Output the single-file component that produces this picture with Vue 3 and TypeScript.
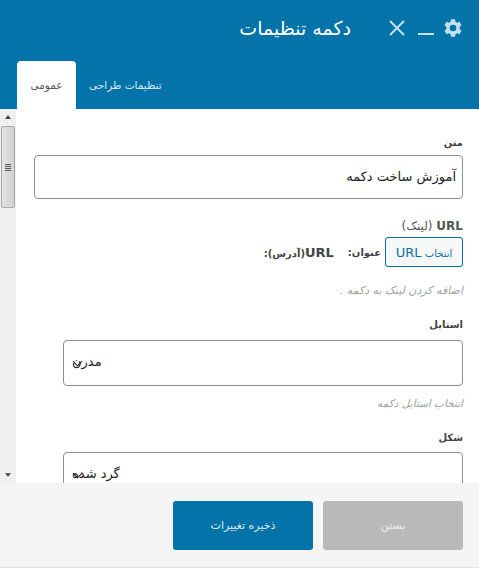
<script setup lang="ts">
const font = 'DejaVu Sans'
</script>

<template>
  <div class="modal" :data-font="font">
    <header class="head">
      <div class="title-row">
        <svg class="gear" viewBox="0 0 24 24" width="20" height="20" aria-hidden="true">
          <path fill="#c3e0ef" fill-rule="evenodd" d="M9.6 1.5h4.8l.6 3 1.9 1.1 2.9-1 2.4 4.2-2.3 2a7 7 0 0 1 0 2.4l2.3 2-2.4 4.2-2.9-1-1.9 1.1-.6 3H9.6l-.6-3-1.9-1.1-2.9 1-2.4-4.2 2.3-2a7 7 0 0 1 0-2.4l-2.3-2 2.4-4.2 2.9 1L9 4.5zM12 8a4 4 0 1 0 0 8 4 4 0 0 0 0-8z" />
        </svg>
        <svg class="minimize" viewBox="0 0 16 4" width="16" height="4" aria-hidden="true">
          <rect width="16" height="2" y="1" fill="#c3e0ef" />
        </svg>
        <svg class="close" viewBox="0 0 16 16" width="16" height="16" aria-hidden="true">
          <path d="M1 1l14 14M15 1L1 15" stroke="#c3e0ef" stroke-width="2" fill="none" />
        </svg>
        <h1 class="title">دکمه تنظیمات</h1>
      </div>
      <nav class="tabs">
        <span class="tab active">عمومی</span>
        <span class="tab">تنظیمات طراحی</span>
      </nav>
    </header>

    <div class="body">
      <div class="scrollbar">
        <span class="arrow up"></span>
        <div class="thumb">
          <span class="grip"></span>
        </div>
        <span class="spacer"></span>
        <span class="arrow down"></span>
      </div>

      <div class="content">
        <label class="label first">متن</label>
        <div class="input">آموزش ساخت دکمه</div>

        <label class="label url-label"><b>URL</b> (لینک)</label>
        <div class="url-row">
          <button class="url-btn">انتخاب <span>URL</span></button>
          <span class="meta">عنوان:</span>
          <span class="meta addr"><b>URL</b>(آدرس):</span>
        </div>
        <p class="hint url-hint">اضافه کردن لینک به دکمه .</p>

        <label class="label style-label">استایل</label>
        <div class="select">
          <span class="chev"></span>
          <span class="sel-text">مدرن</span>
        </div>
        <p class="hint style-hint">انتخاب استایل دکمه</p>

        <label class="label shape-label">شکل</label>
        <div class="select">
          <span class="chev"></span>
          <span class="sel-text">گرد شده</span>
        </div>
      </div>
    </div>

    <footer class="foot">
      <button class="btn primary">ذخیره تغییرات</button>
      <button class="btn muted">بستن</button>
    </footer>
  </div>
</template>

<style>
html, body { margin: 0; background: #fff; }
</style>

<style scoped>
.modal {
  width: 479px;
  height: 570px;
  display: flex;
  flex-direction: column;
  overflow: hidden;
  font-family: "DejaVu Sans", "Noto Sans", sans-serif;
  color: #23282d;
}
.head {
  height: 109px;
  background: #0473aa;
  display: flex;
  flex-direction: column;
  justify-content: space-between;
  flex: none;
}
.title-row {
  display: flex;
  align-items: center;
  direction: rtl;
  padding: 17px 16px 0 0;
  height: 22px;
}
.gear { margin-left: 9px; }
.minimize { margin-left: 13px; margin-top: 12px; }
.close { margin-left: 38px; }
.title {
  margin: 0;
  color: #fff;
  font-size: 19px;
  font-weight: 400;
  line-height: 22px;
}
.tabs {
  display: flex;
  padding-left: 17px;
  height: 48px;
}
.tab {
  width: 59px;
  height: 48px;
  display: flex;
  align-items: center;
  justify-content: center;
  font-size: 10.5px;
  color: #dbeaf3;
  white-space: nowrap;
  direction: rtl;
}
.tab.active {
  background: #fff;
  color: #555;
  border-radius: 4px 4px 0 0;
}
.tab:not(.active) {
  width: auto;
  padding: 0 13px;
}
.body {
  height: 374px;
  display: flex;
  flex: none;
  overflow: hidden;
}
.scrollbar {
  width: 16px;
  flex: none;
  background: #f0f0f0;
  display: flex;
  flex-direction: column;
  align-items: center;
}
.arrow {
  width: 0;
  height: 0;
  border-left: 3.5px solid transparent;
  border-right: 3.5px solid transparent;
  flex: none;
}
.arrow.up {
  border-bottom: 4px solid #444;
  margin-top: 6px;
}
.arrow.down {
  border-top: 4px solid #555;
  margin-bottom: 6px;
}
.thumb {
  width: 14px;
  height: 82px;
  margin-top: 7px;
  box-sizing: border-box;
  border: 1px solid #a8a8a8;
  border-radius: 2px;
  background: linear-gradient(to right, #e4e4e4, #d0d0d0);
  display: flex;
  align-items: center;
  justify-content: center;
  flex: none;
}
.grip {
  width: 6px;
  height: 7px;
  background: repeating-linear-gradient(to bottom, #555 0, #555 1px, transparent 1px, transparent 2px);
}
.spacer { flex: 1; }
.content {
  flex: 1;
  direction: rtl;
  padding: 0 16px 0 0;
  display: flex;
  flex-direction: column;
  align-items: flex-start;
  min-width: 0;
}
.label {
  font-size: 10px;
  line-height: 14px;
  font-weight: 700;
  color: #444;
  display: block;
}
.first { margin-top: 27px; margin-bottom: 5px; }
.input {
  width: 429px;
  height: 44px;
  box-sizing: border-box;
  border: 1px solid #8c8f94;
  border-radius: 4px;
  padding: 0 6px;
  font-size: 13px;
  line-height: 42px;
  color: #222;
}
.url-label {
  margin-top: 20px;
  font-size: 12px;
  color: #555;
  direction: rtl;
  font-weight: 400;
}
.url-label b { font-weight: 700; }
.url-row {
  display: flex;
  align-items: center;
  margin-top: 4px;
  direction: rtl;
}
.url-btn {
  width: 78px;
  height: 30px;
  box-sizing: border-box;
  border: 1px solid #0473aa;
  border-radius: 3px;
  background: #f6f7f7;
  color: #0473aa;
  font: inherit;
  font-size: 10px;
  padding: 0;
  direction: rtl;
  white-space: nowrap;
}
.url-btn span { font-size: 13px; }
.meta {
  font-size: 10px;
  color: #444;
  font-weight: 700;
  margin-right: 4px;
  white-space: nowrap;
}
.addr {
  margin-right: 14px;
  font-size: 10px;
}
.addr b { font-size: 13px; }
.hint {
  margin: 9px 0 0;
  font-size: 10.5px;
  line-height: 14px;
  color: #a0a0a0;
  font-style: italic;
}
.url-hint { margin-top: 17px; font-size: 11px; }
.style-label { margin-top: 20px; margin-bottom: 8px; }
.style-hint { margin-top: 10px; }
.select {
  width: 400px;
  height: 46px;
  box-sizing: border-box;
  flex: none;
  border: 1px solid #8c8f94;
  border-radius: 4px;
  position: relative;
  padding-left: 8px;
  direction: ltr;
  display: flex;
  align-items: center;
  background: #fff;
}
.sel-text {
  direction: rtl;
  font-size: 13px;
  color: #222;
  margin-top: -4px;
}
.chev {
  position: absolute;
  left: 10px;
  top: 17px;
  width: 6px;
  height: 6px;
  border-right: 1.5px solid #222;
  border-bottom: 1.5px solid #222;
  transform: rotate(45deg);
}
.shape-label { margin-top: 21px; margin-bottom: 7px; }
.foot {
  height: 85px;
  flex: none;
  box-sizing: border-box;
  background: #f5f5f5;
  border-bottom: 1px solid #e0e0e0;
  display: flex;
  justify-content: flex-end;
  gap: 10px;
  padding: 18px 16px 0 0;
  margin-bottom: 2px;
}
.btn {
  width: 140px;
  height: 49px;
  border: 0;
  border-radius: 3px;
  font-family: inherit;
  font-size: 11px;
  direction: rtl;
  color: #fff;
  padding: 0;
}
.primary { background: #0473aa; color: #dbeaf3; }
.muted { background: #b9b9b9; color: #f0f0f0; }
</style>
